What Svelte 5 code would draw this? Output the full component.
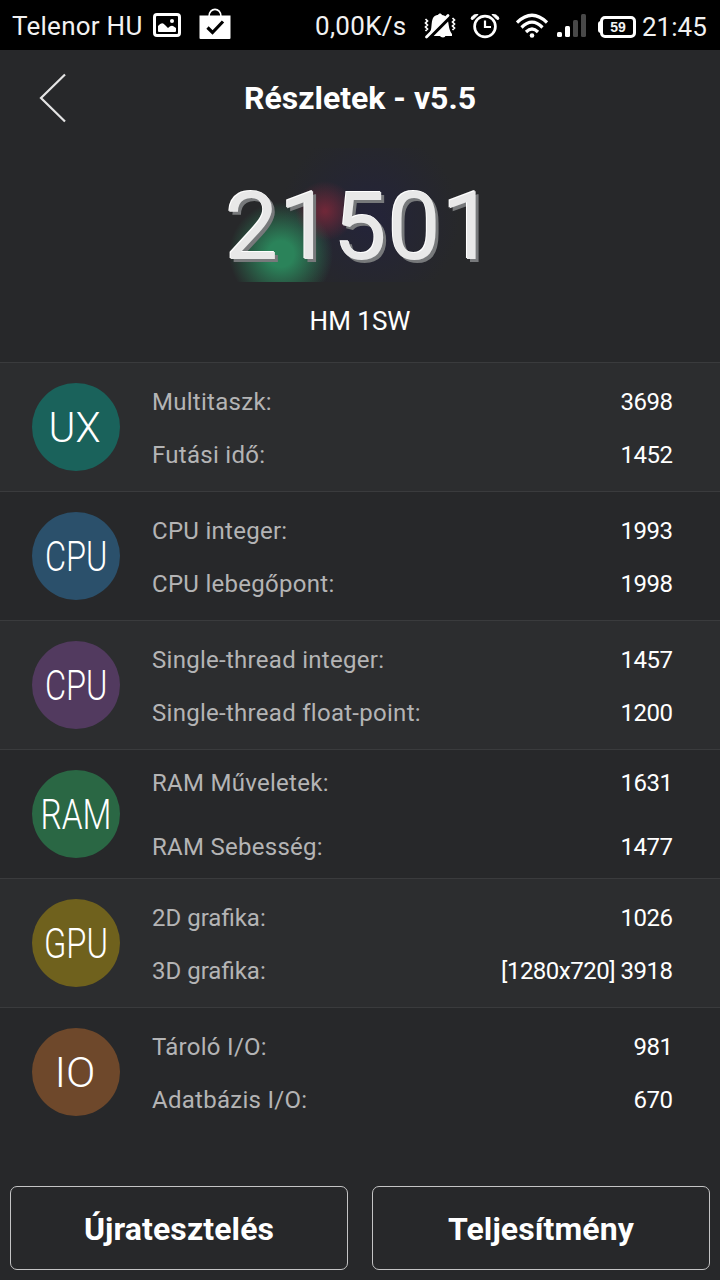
<script lang="ts">
  type Entry = { label: string; value: string };
  type Group = {
    badge: string;
    tone: string;
    // left edge and drawn width of the caption inside the 88px circle
    left: number;
    width: number;
    entries: Entry[];
  };

  const score = '21501';
  const device = 'HM 1SW';

  const groups: Group[] = [
    {
      badge: 'UX', tone: 'teal', left: 16.5, width: 52,
      entries: [
        { label: 'Multitaszk:', value: '3698' },
        { label: 'Futási idő:', value: '1452' }
      ]
    },
    {
      badge: 'CPU', tone: 'blue', left: 13, width: 62.5,
      entries: [
        { label: 'CPU integer:', value: '1993' },
        { label: 'CPU lebegőpont:', value: '1998' }
      ]
    },
    {
      badge: 'CPU', tone: 'purple', left: 13, width: 62.5,
      entries: [
        { label: 'Single-thread integer:', value: '1457' },
        { label: 'Single-thread float-point:', value: '1200' }
      ]
    },
    {
      badge: 'RAM', tone: 'green', left: 8.5, width: 71,
      entries: [
        { label: 'RAM Műveletek:', value: '1631' },
        { label: 'RAM Sebesség:', value: '1477' }
      ]
    },
    {
      badge: 'GPU', tone: 'olive', left: 12, width: 64,
      entries: [
        { label: '2D grafika:', value: '1026' },
        { label: '3D grafika:', value: '[1280x720] 3918' }
      ]
    },
    {
      badge: 'IO', tone: 'brown', left: 22.5, width: 41,
      entries: [
        { label: 'Tároló I/O:', value: '981' },
        { label: 'Adatbázis I/O:', value: '670' }
      ]
    }
  ];
</script>

<div class="screen">
  <div class="status">
    <span class="carrier">Telenor HU</span>
    <svg class="picture" width="28" height="24" viewBox="0 0 28 24">
      <rect x="1.5" y="1.5" width="25" height="21" rx="2.5" fill="none" stroke="#fff" stroke-width="3" />
      <path d="M5 18v-5q4-5 7-1l3 3q3-3 5-2l3 2v3q0 1-1 1H6q-1 0-1-1z" fill="#fff" />
      <circle cx="19" cy="8" r="2" fill="#fff" />
    </svg>
    <svg class="store" width="32" height="32" viewBox="0 0 32 32">
      <path d="M10 8.500C10 -1 22 -1 22 8.500" fill="none" stroke="#fff" stroke-width="1.600" />
      <path d="M.5 7.500h31V30q0 1-1 1h-29q-1 0-1-1z" fill="#fff" />
      <path d="M8.500 19.500l5 5L24 13.500" fill="none" stroke="#000" stroke-width="3.200" />
    </svg>

    <span class="speed">0,00K/s</span>
    <svg class="mute" width="32" height="26" viewBox="0 0 32 26">
      <path d="M6 19c2-2 1-10 3-14 2-3 4-3 5-3 1-2 3-2 4 0 3 0 5 3 6 6 1 5 1 9 4 13v2H5z" fill="#fff" />
      <path d="M15 22h7q-1 2.500-3 2.500t-4-2.500z" fill="#fff" />
      <path d="M4.500 25L28 1.500" stroke="#000" stroke-width="4.500" />
      <path d="M2.500 24L24 2.500" stroke="#fff" stroke-width="2.800" stroke-linecap="round" />
      <path d="M1.500 6l2 2-2 2 2 2-2 2 2 2-2 2M28.500 5l2 2-2 2 2 2-2 2 2 2-2 2" fill="none" stroke="#fff" stroke-width="1.700" />
    </svg>
    <svg class="alarm" width="30" height="26" viewBox="0 0 30 26">
      <circle cx="15" cy="13.500" r="10.400" fill="none" stroke="#fff" stroke-width="2.700" />
      <path d="M15 7.500v6.500h6" fill="none" stroke="#fff" stroke-width="2.200" />
      <path d="M1 6Q2 1 8 1.500L3 6.500zM29 6Q28 1 22 1.500L27 6.500z" fill="#fff" stroke="#fff" />
    </svg>
    <svg class="wifi" width="32" height="26" viewBox="0 0 32 26">
      <g fill="none" stroke="#fff" stroke-width="3.200">
        <path d="M1 9.500Q16-5 31 9.500" />
        <path d="M5.500 14.500Q16 4 26.500 14.500" />
        <path d="M10 19Q16 13 22 19" />
      </g>
      <circle cx="16" cy="22.500" r="2.300" fill="#fff" />
    </svg>
    <svg class="signal" width="29" height="24" viewBox="0 0 29 24">
      <rect x="0" y="18" width="5" height="5" rx="1.500" fill="#fff" />
      <rect x="8" y="12" width="5" height="11" rx="1.500" fill="#fff" />
      <rect x="16" y="6" width="5" height="17" rx="1.500" fill="#484848" />
      <rect x="24" y="0" width="5" height="23" rx="1.500" fill="#484848" />
    </svg>
    <span class="battery">59</span>
    <span class="clock">21:45</span>
  </div>

  <header>
    <svg class="back" width="28" height="50" viewBox="0 0 28 50">
      <path d="M26 1.500L2 25L26 48.500" fill="none" stroke="#e4e4e4" stroke-width="2.200" />
    </svg>
    <h1>Részletek - v5.5</h1>
  </header>

  <section class="summary">
    <div class="score">{score}</div>
    <div class="device">{device}</div>
  </section>

  <main>
    {#each groups as group}
      <div class="group {group.tone}">
        <svg class="badge" width="88" height="88" viewBox="0 0 88 88">
          <circle cx="44" cy="44" r="44" />
          <text x={group.left} y="59" textLength={group.width} lengthAdjust="spacingAndGlyphs">{group.badge}</text>
        </svg>
        <div class="entries">
          {#each group.entries as entry}
            <div class="entry">
              <span class="label">{entry.label}</span>
              <span class="value">{entry.value}</span>
            </div>
          {/each}
        </div>
      </div>
    {/each}
  </main>

  <footer>
    <button type="button">Újratesztelés</button>
    <button type="button">Teljesítmény</button>
  </footer>
</div>

<style>
  :global(body) {
    background: #27282a;
  }
  .screen {
    display: flex;
    flex-direction: column;
    width: 720px;
    height: 1280px;
    overflow: hidden;
    background: #27282a;
    color: #fff;
    font-family: Roboto, sans-serif;
  }

  .status {
    display: flex;
    align-items: center;
    box-sizing: border-box;
    height: 50px;
    padding: 1px 0 0 12px;
    background: #000;
    color: #f2f2f2;
    font-size: 26px;
    line-height: 50px;
    white-space: nowrap;
  }
  .status svg { flex: none; }
  .carrier { width: 141px; letter-spacing: 0.25px; }
  .picture { margin: -1px 18px 0 0; }
  .store { margin: -4px 84px 0 0; }
  .speed { width: 109px; letter-spacing: 0.3px; }
  .mute { margin-right: 14px; }
  .alarm { margin-right: 16px; }
  .wifi { margin-right: 9px; }
  .signal { margin-right: 14px; }
  .battery {
    position: relative;
    box-sizing: border-box;
    width: 36px;
    height: 22px;
    margin: 2px 6px 0 0;
    border: 3px solid #fff;
    border-radius: 5px;
    font: bold 14px/16px "Liberation Sans", sans-serif;
    text-align: center;
  }
  .battery::before {
    content: '';
    position: absolute;
    left: -5px;
    top: 2px;
    width: 4px;
    height: 12px;
    border-radius: 3px 0 0 3px;
    background: #fff;
  }
  .clock { margin-top: 2px; }

  header {
    display: grid;
    grid-template-columns: 40px 80px 1fr 120px;
    align-items: center;
    box-sizing: border-box;
    height: 98px;
    padding-bottom: 2px;
  }
  .back { grid-column: 2; margin-left: -1px; }
  h1 {
    margin: 0;
    font-size: 32px;
    font-weight: 700;
    line-height: 38px;
    text-align: center;
  }

  .summary {
    height: 214px;
    text-align: center;
  }
  .score {
    height: 134px;
    background:
      radial-gradient(circle 30px at 325px 63px, rgba(128, 40, 58, 0.8) 5%, transparent),
      radial-gradient(circle 52px at 281px 106px, #2b835a 25%, transparent),
      radial-gradient(circle 90px at 370px 70px, #242438 10%, transparent);
    color: #e8e8e8;
    font-size: 95px;
    line-height: 157px;
    letter-spacing: 0.8px;
    text-indent: 1px;
    text-shadow: -1px -1px 0 #fff, 3px 3px 0 #77797b;
  }
  .device {
    padding-top: 23px;
    font-size: 26px;
    line-height: 32px;
  }

  main { height: 774px; }
  .group {
    display: flex;
    align-items: center;
    box-sizing: border-box;
    height: 129px;
    padding: 0 48px 0 32px;
    border-top: 1px solid #3a3b3d;
  }
  .group:nth-child(odd) { background: #2c2d2f; }
  .badge {
    flex: none;
    margin-right: 32px;
    overflow: visible;
  }
  .badge text {
    fill: #fff;
    font-size: 43px;
    font-weight: 300;
  }
  .teal circle { fill: #1a625b; }
  .blue circle { fill: #2b506b; }
  .purple circle { fill: #523a5f; }
  .green circle { fill: #2a6744; }
  .olive circle { fill: #6f611d; }
  .brown circle { fill: #6e482b; }

  .entries { flex: 1; padding-top: 4px; }
  .entry {
    display: flex;
    justify-content: space-between;
    height: 53px;
    font-size: 24px;
    line-height: 53px;
    white-space: nowrap;
  }
  .green .entries { padding-top: 2px; }
  .green .entry { height: 64px; line-height: 64px; }
  .label { color: #b4b4b5; letter-spacing: 0.28px; }
  /* no tracking here, it would break the fi ligature */
  .olive .label { letter-spacing: 0; }
  .value { margin-right: -0.5px; letter-spacing: -0.5px; }

  footer {
    display: flex;
    gap: 24px;
    margin: auto 10px 10px;
  }
  button {
    flex: 1;
    height: 84px;
    padding: 2px 0 0;
    border: 1px solid #c4c4c5;
    border-radius: 7px;
    background: transparent;
    color: #fff;
    font: 700 32px/38px Roboto, sans-serif;
    letter-spacing: 0.1px;
  }
</style>
